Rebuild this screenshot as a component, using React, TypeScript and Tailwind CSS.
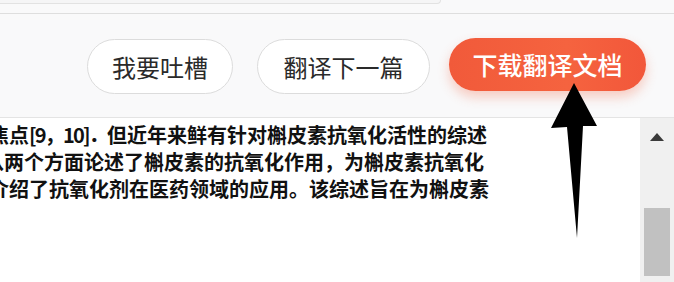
import React from "react";

const cjk = { fontFamily: '"Noto Sans CJK SC", "Noto Sans", sans-serif' };

export default function App() {
  return (
    <div className="relative w-[674px] h-[282px] overflow-hidden bg-[#f9f9fa]" style={cjk}>
      {/* top strip */}
      <div className="h-[14px] border-b border-[#dedede]">
        <div className="w-[441px] h-[4px] border-b border-r border-[#e2e2e2] rounded-br-[4px] bg-[#f5f5f6]" />
      </div>

      {/* buttons row */}
      <div className="h-[103px] flex justify-end items-start pt-[25px] pr-[28px]">
        <button className="h-[55px] w-[146px] rounded-full border border-[#dcdcdc] bg-white text-[24px] text-[#2a2a2a] flex items-center justify-center">
          我要吐槽
        </button>
        <button className="ml-[24px] h-[55px] w-[173px] rounded-full border border-[#dcdcdc] bg-white text-[24px] text-[#2a2a2a] flex items-center justify-center">
          翻译下一篇
        </button>
        <button className="ml-[19px] mt-[-1px] h-[53px] w-[197px] rounded-full bg-[linear-gradient(90deg,#f15a3a,#f5633f_60%,#f2573a)] text-white text-[25px] font-medium flex items-center justify-center shadow-[0_6px_12px_rgba(242,96,60,0.3)]">
          下载翻译文档
        </button>
      </div>

      {/* content */}
      <div className="h-[165px] flex border-t border-[#e4e4e4] bg-white">
        <div className="w-[640px] overflow-hidden pt-[3px] text-[20px] leading-[27px] text-[#111] font-semibold whitespace-nowrap">
          <div className="ml-[-11px]">
            焦点<span className="tracking-[-1.8px]">[9，10]．</span>但近年来鲜有针对槲皮素抗氧化活性的综述
          </div>
          <div className="ml-[-16px]">从两个方面论述了槲皮素的抗氧化作用，为槲皮素抗氧化</div>
          <div className="ml-[-11px]">介绍了抗氧化剂在医药领域的应用。该综述旨在为槲皮素</div>
        </div>
        <div className="w-[34px] bg-[#f0f0f0] flex flex-col items-center">
          <svg width="14" height="8" viewBox="0 0 14 8" className="mt-[15px]">
            <polygon points="7,0 14,8 0,8" fill="#3a3a3a" />
          </svg>
          <div className="mt-[67px] ml-[-1px] w-[26px] h-[68px] bg-[#c1c1c1]" />
        </div>
      </div>

      {/* annotation arrow */}
      <svg className="absolute left-0 top-0 pointer-events-none" width="674" height="282" viewBox="0 0 674 282">
        <polygon points="574,83 597,126 583,126 577,238 567,127 551,128" fill="#000" />
      </svg>
    </div>
  );
}
